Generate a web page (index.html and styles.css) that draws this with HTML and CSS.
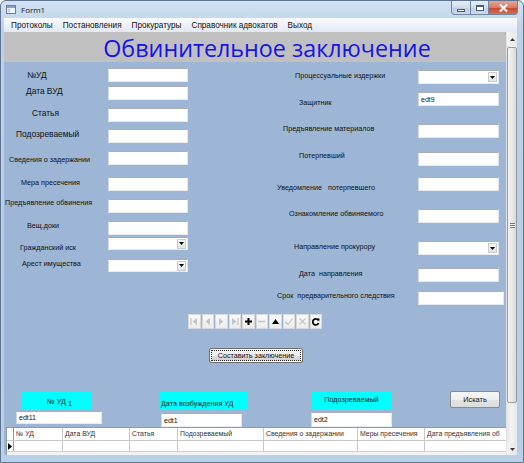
FILE: index.html
```html
<!DOCTYPE html>
<html lang="ru">
<head>
<meta charset="utf-8">
<title>Form1</title>
<link rel="stylesheet" href="styles.css">
</head>
<body>
<div class="window">
  <div class="titlebar">
    <svg class="app-icon" width="10" height="9" viewBox="0 0 10 9"><rect x="0.5" y="0.5" width="9" height="8" fill="#f4f7fb" stroke="#6d7f95"/><rect x="1" y="1" width="8" height="2" fill="#7da2cf"/><rect x="1.5" y="3.5" width="3" height="4" fill="#c9d3de"/></svg>
    <span class="title-text">Form1</span>
    <div class="caption-btns">
      <div class="cbtn cmin"><span class="min-glyph"></span></div>
      <div class="cbtn cmax"><span class="max-glyph"></span></div>
      <div class="cbtn cclose"><svg width="9" height="8" viewBox="0 0 9 8"><path d="M1 0.5 L8 7.5 M8 0.5 L1 7.5" stroke="#fff" stroke-width="2"/></svg></div>
    </div>
  </div>
  <div class="frame-row">
    <div class="client">
      <div class="menubar">
        <span class="mi">Протоколы</span>
        <span class="mi">Постановления</span>
        <span class="mi">Прокуратуры</span>
        <span class="mi">Справочник адвокатов</span>
        <span class="mi">Выход</span>
      </div>
      <div class="client-main">
        <div class="content">
          <div class="header-panel">Обвинительное заключение</div>
          <div class="forms">
            <div class="col col-left">
              <div class="row"><span class="lbl lbl-l big">№УД</span><span class="edit"></span></div>
              <div class="row"><span class="lbl lbl-l big">Дата ВУД</span><span class="edit"></span></div>
              <div class="row"><span class="lbl lbl-l big">Статья</span><span class="edit"></span></div>
              <div class="row"><span class="lbl lbl-l big">Подозреваемый</span><span class="edit"></span></div>
              <div class="row"><span class="lbl lbl-l">Сведения о задержании</span><span class="edit"></span></div>
              <div class="row"><span class="lbl lbl-l">Мера пресечения</span><span class="edit"></span></div>
              <div class="row"><span class="lbl lbl-l">Предъявление обвинения</span><span class="edit"></span></div>
              <div class="row"><span class="lbl lbl-l">Вещ.доки</span><span class="edit"></span></div>
              <div class="row combo-row"><span class="lbl lbl-l">Гражданский иск</span><span class="edit combo"><span class="dd"><svg width="5" height="3" viewBox="0 0 5 3"><path d="M0 0H5L2.5 3Z"/></svg></span></span></div>
              <div class="row combo-row"><span class="lbl lbl-l">Арест имущества</span><span class="edit combo"><span class="dd"><svg width="5" height="3" viewBox="0 0 5 3"><path d="M0 0H5L2.5 3Z"/></svg></span></span></div>
            </div>
            <div class="col col-right">
              <div class="row"><span class="lbl lbl-r">Процессуальные издержки</span><span class="edit combo"><span class="dd"><svg width="5" height="3" viewBox="0 0 5 3"><path d="M0 0H5L2.5 3Z"/></svg></span></span></div>
              <div class="row"><span class="lbl lbl-r">Защитник</span><span class="edit">edt9</span></div>
              <div class="row"><span class="lbl lbl-r">Предъявление материалов</span><span class="edit"></span></div>
              <div class="row"><span class="lbl lbl-r">Потерпевший</span><span class="edit"></span></div>
              <div class="row"><span class="lbl lbl-r">Уведомление &nbsp;&nbsp;потерпевшего</span><span class="edit"></span></div>
              <div class="row"><span class="lbl lbl-r">Ознакомление обвиняемого</span><span class="edit"></span></div>
              <div class="row"><span class="lbl lbl-r">Направление прокурору</span><span class="edit combo"><span class="dd"><svg width="5" height="3" viewBox="0 0 5 3"><path d="M0 0H5L2.5 3Z"/></svg></span></span></div>
              <div class="row"><span class="lbl lbl-r">Дата &nbsp;направления</span><span class="edit"></span></div>
              <div class="row"><span class="lbl lbl-r">Срок &nbsp;предварительного следствия</span><span class="edit wide"></span></div>
            </div>
          </div>
          <div class="nav">
            <span class="nb"><svg width="8" height="7" viewBox="0 0 8 7"><path d="M1 0V7" stroke="#c4c4c4" stroke-width="1.2"/><path d="M7 0L2.5 3.5L7 7Z" fill="#c4c4c4"/></svg></span>
            <span class="nb"><svg width="8" height="7" viewBox="0 0 8 7"><path d="M6 0L1.5 3.5L6 7Z" fill="#c4c4c4"/></svg></span>
            <span class="nb"><svg width="8" height="7" viewBox="0 0 8 7"><path d="M2 0L6.5 3.5L2 7Z" fill="#c4c4c4"/></svg></span>
            <span class="nb"><svg width="8" height="7" viewBox="0 0 8 7"><path d="M1 0L5.5 3.5L1 7Z" fill="#c4c4c4"/><path d="M7 0V7" stroke="#c4c4c4" stroke-width="1.2"/></svg></span>
            <span class="nb"><svg width="7" height="7" viewBox="0 0 7 7"><path d="M3.5 0V7M0 3.5H7" stroke="#000" stroke-width="2"/></svg></span>
            <span class="nb"><svg width="7" height="7" viewBox="0 0 7 7"><path d="M0 3.5H7" stroke="#c4c4c4" stroke-width="1.5"/></svg></span>
            <span class="nb"><svg width="7" height="5" viewBox="0 0 7 5"><path d="M0 5H7L3.5 0Z" fill="#000"/></svg></span>
            <span class="nb"><svg width="8" height="7" viewBox="0 0 8 7"><path d="M0.5 4L3 6.5L7.5 0.5" stroke="#c4c4c4" stroke-width="1.2" fill="none"/></svg></span>
            <span class="nb"><svg width="7" height="7" viewBox="0 0 7 7"><path d="M0.5 0.5L6.5 6.5M6.5 0.5L0.5 6.5" stroke="#c4c4c4" stroke-width="1.2"/></svg></span>
            <span class="nb"><svg width="8" height="8" viewBox="0 0 8 8"><path d="M6.2 2.2A3 3 0 1 0 6.6 5" stroke="#000" stroke-width="1.7" fill="none"/><path d="M4.6 0.4L7.6 0.6L7.2 3.6Z" fill="#000"/></svg></span>
          </div>
          <div class="make-row"><span class="btn make-btn">Составить заключение</span></div>
          <div class="search">
            <div class="sgroup g1">
              <div class="cyan c1">№ УД<span class="sub">1</span></div>
              <span class="edit e1">edt11</span>
            </div>
            <div class="sgroup g2">
              <div class="cyan c2">Дата возбуждения УД</div>
              <span class="edit e2">edt1</span>
            </div>
            <div class="sgroup g3">
              <div class="cyan c3">Подозреваемый</div>
              <span class="edit e3">edt2</span>
            </div>
            <span class="btn find-btn">Искать</span>
          </div>
          <div class="grid">
            <div class="grow ghead">
              <span class="gc ind"></span>
              <span class="gc w1">№ УД</span>
              <span class="gc w2">Дата ВУД</span>
              <span class="gc w3">Статья</span>
              <span class="gc w4">Подозреваемый</span>
              <span class="gc w5">Сведения о задержании</span>
              <span class="gc w6">Меры пресечения</span>
              <span class="gc w7">Дата предъявления об</span>
            </div>
            <div class="grow gdata">
              <span class="gc ind"><svg width="4" height="7" viewBox="0 0 4 7"><path d="M0 0L4 3.5L0 7Z" fill="#000"/></svg></span>
              <span class="gc w1"></span>
              <span class="gc w2"></span>
              <span class="gc w3"></span>
              <span class="gc w4"></span>
              <span class="gc w5"></span>
              <span class="gc w6"></span>
              <span class="gc w7"></span>
            </div>
          </div>
        </div>
        <div class="vscroll">
          <span class="sarrow up"><svg width="5" height="3" viewBox="0 0 5 3"><path d="M0 3H5L2.5 0Z"/></svg></span>
          <span class="thumb"><span class="grip"></span></span>
          <span class="track"></span>
          <span class="sarrow down"><svg width="5" height="3" viewBox="0 0 5 3"><path d="M0 0H5L2.5 3Z"/></svg></span>
        </div>
      </div>
    </div>
  </div>
</div>
</body>
</html>
```
FILE: styles.css
```css
* { box-sizing: border-box; }
html, body { margin: 0; padding: 0; }
body {
  width: 524px;
  height: 463px;
  overflow: hidden;
  background: #ffffff;
  font-family: "Liberation Sans", Arial, sans-serif;
  color: #000;
}
.window {
  width: 524px;
  height: 463px;
  display: flex;
  flex-direction: column;
  border: 1px solid #5f7490;
  border-radius: 6px 6px 0 0;
  background: linear-gradient(180deg, #d3e2f2 0%, #bcd2ea 6%, #b7cee7 60%, #bad0e8 100%);
}
.titlebar {
  height: 17px;
  display: flex;
  align-items: center;
  flex: none;
}
.app-icon { margin-left: 5px; flex: none; }
.title-text {
  margin-left: 5px;
  font-family: "Open Sans", "Liberation Sans", sans-serif;
  font-size: 8px;
  color: #1a1a1a;
}
.caption-btns {
  margin-left: auto;
  margin-right: 5px;
  align-self: flex-start;
  display: flex;
}
.cbtn {
  height: 14px;
  display: flex;
  align-items: center;
  justify-content: center;
  border: 1px solid #7387a3;
  border-top: none;
}
.cmin {
  width: 20px;
  border-radius: 0 0 0 4px;
  background: linear-gradient(180deg, #e6eef8 0%, #cfdcec 50%, #bccde2 51%, #c9daee 100%);
}
.cmax {
  width: 18px;
  border-left: none;
  background: linear-gradient(180deg, #e6eef8 0%, #cfdcec 50%, #bccde2 51%, #c9daee 100%);
}
.cclose {
  width: 29px;
  border-left: none;
  border-radius: 0 0 4px 0;
  background: linear-gradient(180deg, #e9a597 0%, #d77b68 50%, #c4472f 51%, #d56e50 100%);
}
.min-glyph {
  width: 8px;
  height: 3px;
  margin-top: 5px;
  background: #fff;
  border: 1px solid #4a5b72;
}
.max-glyph {
  width: 8px;
  height: 6px;
  border: 1px solid #4a5b72;
  border-top-width: 2px;
  background: #fff;
}
.frame-row {
  flex: 1;
  display: flex;
  padding: 0 6px 7px 3px;
  min-height: 0;
}
.client {
  flex: 1;
  display: flex;
  flex-direction: column;
  background: #9db6d5;
  min-width: 0;
}
.menubar {
  height: 14px;
  flex: none;
  display: flex;
  align-items: center;
  padding-left: 2px;
  background: linear-gradient(180deg, #f8fafd 0%, #eef2f8 50%, #e2e9f3 100%);
  font-size: 8.2px;
  color: #111;
}
.mi { padding: 0 5px; white-space: nowrap; }
.client-main {
  flex: 1;
  display: flex;
  min-height: 0;
}
.content {
  flex: 1;
  display: flex;
  flex-direction: column;
  min-width: 0;
}
.header-panel {
  height: 30px;
  flex: none;
  background: #c0c0c0;
  display: flex;
  justify-content: center;
  align-items: center;
  padding-top: 1px;
  padding-left: 24px;
  font-family: "Open Sans", "Liberation Sans", sans-serif;
  font-size: 23.3px;
  color: #1414e6;
  white-space: nowrap;
}
.forms {
  height: 243px;
  flex: none;
  display: flex;
}
.col { display: flex; flex-direction: column; }
.col-left { width: 266px; flex: none; }
.col-right { flex: 1; }
.row {
  display: flex;
  align-items: center;
  height: 14px;
  flex: none;
}
.combo-row { height: 13px; }
.lbl {
  flex: none;
  font-size: 7.2px;
  line-height: 9px;
  white-space: nowrap;
  color: #101010;
}
.lbl.big { font-size: 8.4px; }
.lbl-l { width: 104px; }
.lbl-r { width: 148px; }
.edit {
  flex: none;
  display: flex;
  align-items: center;
  width: 80px;
  height: 14px;
  background: #fff;
  border: 1px solid;
  border-color: #a9aeb6 #dfe5ec #e6ebf1 #d3d8df;
  padding-left: 2px;
  font-size: 7px;
  color: #111;
}
.col-right .edit { width: 81px; }
.col-right .edit.wide { width: 86px; }
.combo-row .edit { height: 13px; }
.combo { justify-content: flex-end; padding-right: 1px; }
.dd {
  width: 9px;
  height: 10px;
  display: flex;
  align-items: center;
  justify-content: center;
  background: linear-gradient(180deg, #f7f7f7, #e3e3e3);
  border: 1px solid #c9cdd2;
}

/* vertical placement of the form rows */
.col-left .row:nth-child(1) { margin-top: 6px; }
.col-left .row:nth-child(2) { margin-top: 4px; }
.col-left .row:nth-child(3) { margin-top: 8px; }
.col-left .row:nth-child(4) { margin-top: 7px; }
.col-left .row:nth-child(5) { margin-top: 8px; }
.col-left .row:nth-child(6) { margin-top: 12px; }
.col-left .row:nth-child(7) { margin-top: 8px; }
.col-left .row:nth-child(8) { margin-top: 8px; }
.col-left .row:nth-child(9) { margin-top: 2px; }
.col-left .row:nth-child(10) { margin-top: 9px; }

.col-right .row:nth-child(1) { margin-top: 8px; }
.col-right .row:nth-child(2) { margin-top: 8px; }
.col-right .row:nth-child(3) { margin-top: 18px; }
.col-right .row:nth-child(4) { margin-top: 14px; }
.col-right .row:nth-child(5) { margin-top: 11px; }
.col-right .row:nth-child(6) { margin-top: 18px; }
.col-right .row:nth-child(7) { margin-top: 18px; }
.col-right .row:nth-child(8) { margin-top: 13px; }
.col-right .row:nth-child(9) { margin-top: 9px; }

/* label indents and small vertical nudges (designer placement) */
.col-left .row:nth-child(1) .lbl { padding-left: 23px; }
.col-left .row:nth-child(2) .lbl { padding-left: 22px; margin-bottom: 3px; }
.col-left .row:nth-child(3) .lbl { padding-left: 28px; margin-bottom: 4px; }
.col-left .row:nth-child(4) .lbl { padding-left: 12px; margin-bottom: 3px; }
.col-left .row:nth-child(5) .lbl { padding-left: 5px; margin-top: 3px; }
.col-left .row:nth-child(6) .lbl { padding-left: 17px; margin-bottom: 3px; }
.col-left .row:nth-child(7) .lbl { padding-left: 1px; margin-bottom: 7px; }
.col-left .row:nth-child(8) .lbl { padding-left: 23px; margin-bottom: 5px; }
.col-left .row:nth-child(9) .lbl { padding-left: 16px; margin-top: 8px; }
.col-left .row:nth-child(10) .lbl { padding-left: 18px; margin-bottom: 4px; }

.col-right .row:nth-child(1) .lbl { padding-left: 25px; margin-bottom: 4px; }
.col-right .row:nth-child(2) .lbl { padding-left: 29px; margin-top: 7px; }
.col-right .row:nth-child(3) .lbl { padding-left: 13px; margin-bottom: 5px; }
.col-right .row:nth-child(4) .lbl { padding-left: 29px; margin-bottom: 7px; }
.col-right .row:nth-child(5) .lbl { padding-left: 7px; margin-top: 6px; }
.col-right .row:nth-child(6) .lbl { padding-left: 19px; margin-bottom: 6px; }
.col-right .row:nth-child(7) .lbl { padding-left: 24px; margin-bottom: 3px; }
.col-right .row:nth-child(8) .lbl { padding-left: 29px; margin-bottom: 4px; }
.col-right .row:nth-child(9) .lbl { padding-left: 7px; margin-bottom: 5px; }

.nav {
  margin-top: 9px;
  height: 15px;
  width: 134px;
  flex: none;
  align-self: center;
  display: grid;
  grid-template-columns: repeat(10, 1fr);
  gap: 1px;
}
.nb {
  display: flex;
  align-items: center;
  justify-content: center;
  background: linear-gradient(180deg, #fafafa, #ececec);
  border: 1px solid #d6d9dd;
}
.make-row {
  margin-top: 19px;
  height: 15px;
  flex: none;
  display: flex;
  justify-content: center;
}
.btn {
  display: flex;
  align-items: center;
  justify-content: center;
  border: 1px solid #707070;
  border-radius: 2px;
  background: linear-gradient(180deg, #f4f4f4 0%, #ebebeb 50%, #dddddd 51%, #cfcfcf 100%);
  font-size: 7.2px;
  color: #111;
  white-space: nowrap;
}
.make-btn {
  width: 94px;
  height: 15px;
  margin-left: 2px;
  box-shadow: inset 0 0 0 1px #fcfcfc;
  outline: 1px dotted #333;
  outline-offset: -3px;
}
.search {
  margin-top: 27px;
  height: 37px;
  flex: none;
  display: flex;
  align-items: flex-start;
}
.sgroup {
  display: flex;
  flex-direction: column;
  align-items: flex-start;
}
.cyan {
  background: #0ff;
  font-size: 7.2px;
  color: #222;
  display: flex;
  justify-content: center;
  white-space: nowrap;
}
.g1 { margin-left: 12px; padding-top: 1px; }
.c1 { width: 71px; height: 18px; margin-left: 5px; padding-top: 6px; padding-left: 6px; }
.sub { font-size: 7.2px; margin-left: 2px; position: relative; top: 2px; }
.e1 { width: 86px; height: 13px; margin-top: 2px; }
.g2 { margin-left: 58px; padding-top: 2px; }
.c2 { width: 87px; height: 18px; padding-top: 7px; justify-content: flex-start; padding-left: 1px; }
.e2 { width: 81px; height: 14px; margin-top: 3px; margin-left: 1px; }
.g3 { margin-left: 64px; padding-top: 1px; }
.c3 { width: 81px; height: 18px; padding-top: 4px; }
.e3 { width: 81px; height: 15px; margin-top: 3px; }
.find-btn {
  width: 50px;
  height: 17px;
  margin-left: 58px;
  margin-top: 1px;
  border-color: #8a8a8a;
  background: linear-gradient(180deg, #f7f7f7 0%, #eeeeee 50%, #e4e4e4 51%, #dcdcdc 100%);
  font-size: 7.4px;
}
.grid {
  height: 28px;
  flex: none;
  margin-left: 2px;
  background: #f2f2f2;
  border-top: 1px solid #8d9bad;
  border-left: 1px solid #8d9bad;
  display: flex;
  flex-direction: column;
  overflow: hidden;
}
.grow {
  display: flex;
  flex: none;
}
.ghead { height: 12px; }
.gdata { height: 12px; border-top: 1px solid #c8c8c8; border-bottom: 1px solid #d0d0d0; }
.gc {
  flex: none;
  background: #fff;
  border-right: 1px solid #c8c8c8;
  font-size: 6.9px;
  line-height: 11px;
  padding-left: 2px;
  white-space: nowrap;
  overflow: hidden;
  color: #222;
}
.ghead .gc { color: #333; }
.ind { width: 7px; padding-left: 1px; display: flex; align-items: center; border-right-color: #9a9a9a; }
.w1 { width: 49px; }
.w2 { width: 67px; }
.w3 { width: 48px; }
.w4 { width: 86px; }
.w5 { width: 94px; }
.w6 { width: 67px; }
.w7 { flex: 1; border-right: none; }

.vscroll {
  width: 11px;
  flex: none;
  display: flex;
  flex-direction: column;
  background: linear-gradient(90deg, #e6e6e6, #f3f3f3 40%, #f3f3f3 60%, #e6e6e6);
  border-left: 1px solid #e3e3e3;
}
.sarrow {
  height: 14px;
  flex: none;
  display: flex;
  align-items: center;
  justify-content: center;
  background: linear-gradient(90deg, #f4f4f4, #e8e8e8);
}
.sarrow.down { height: 12px; }
.sarrow svg path { fill: #3c3c3c; }
.thumb {
  height: 356px;
  flex: none;
  margin: 1px 0 0 0;
  border: 1px solid #9a9a9a;
  border-radius: 2px;
  background: linear-gradient(90deg, #f3f3f3 0%, #e9e9e9 50%, #d9d9d9 100%);
  display: flex;
  align-items: center;
  justify-content: center;
}
.grip {
  width: 5px;
  height: 5px;
  background: repeating-linear-gradient(180deg, #7a7a7a 0, #7a7a7a 1px, #f0f0f0 1px, #f0f0f0 2px);
}
.track { flex: 1; }
```
